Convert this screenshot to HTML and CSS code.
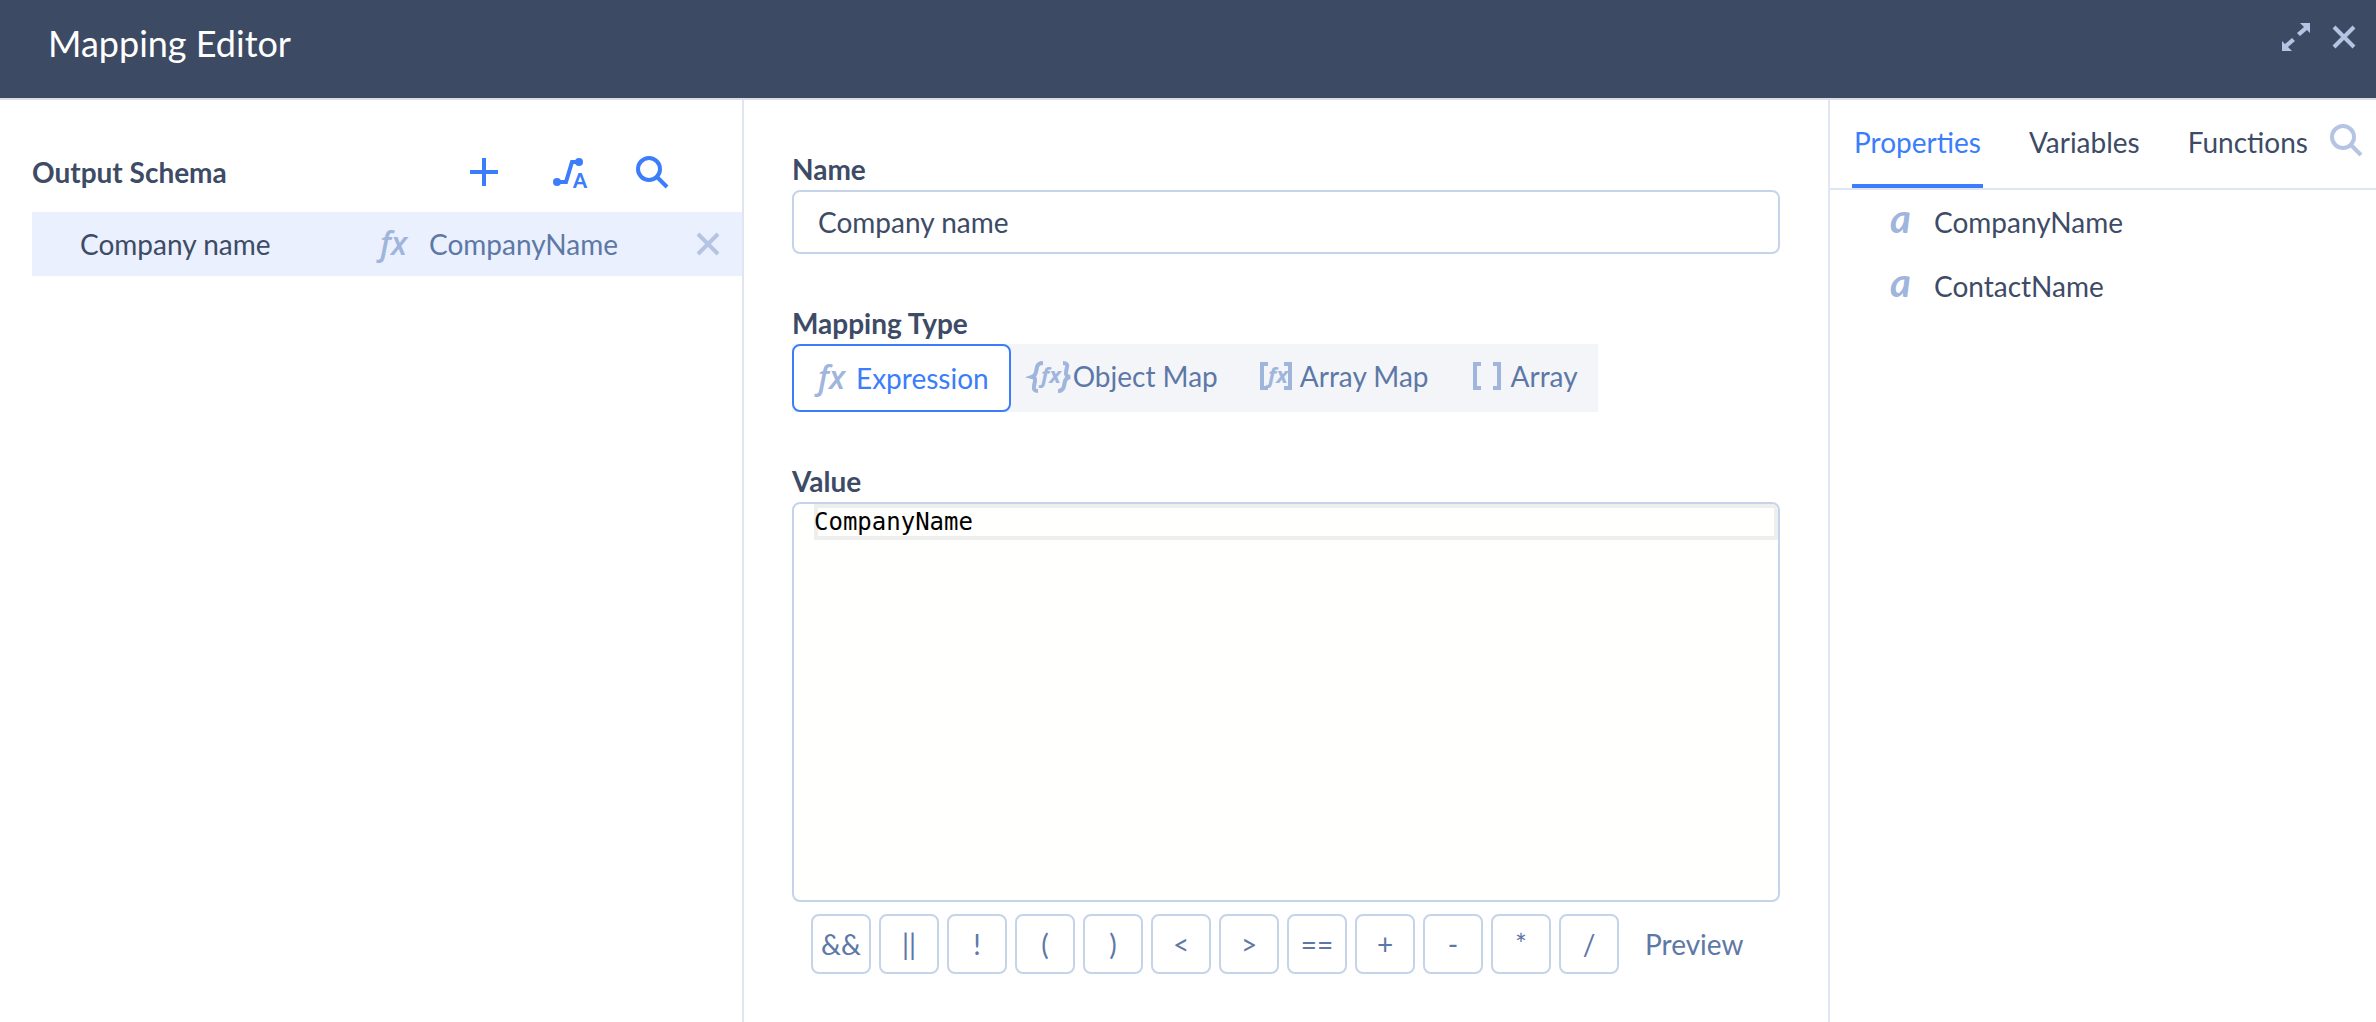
FILE: index.html
```html
<!DOCTYPE html>
<html lang="en">
<head>
<meta charset="utf-8">
<title>Mapping Editor</title>
<link rel="stylesheet" href="styles.css">
</head>
<body>
<header class="topbar">
  <h1 class="title">Mapping Editor</h1>
  <div class="window-actions">
    <button class="icon-button" type="button" aria-label="Expand">
      <svg width="28" height="28" viewBox="0 0 28 28" fill="currentColor"><path d="M18 0h10v10l-3-3-7 6-3-3 7-6-4-4zM10 28H0V18l3 3 7-6 3 3-7 6 4 4z"/></svg>
    </button>
    <button class="icon-button" type="button" aria-label="Close">
      <svg width="24" height="24" viewBox="0 0 24 24" fill="none" stroke="currentColor" stroke-width="4"><path d="M2 2l20 20M22 2L2 22"/></svg>
    </button>
  </div>
</header>

<main class="workspace">
  <section class="schema">
    <div class="schema-head">
      <h2 class="schema-title">Output Schema</h2>
      <div class="schema-tools">
        <button class="icon-button" type="button" aria-label="Add">
          <svg width="36" height="36" viewBox="0 0 36 36" fill="none" stroke="currentColor" stroke-width="4"><path d="M18 4v28M4 18h28"/></svg>
        </button>
        <button class="icon-button" type="button" aria-label="Auto map">
          <svg width="40" height="36" viewBox="0 0 40 36"><path d="M9 28h9l6-20h7" fill="none" stroke="currentColor" stroke-width="4"/><circle cx="9" cy="28" r="4" fill="currentColor"/><circle cx="31" cy="8" r="4" fill="currentColor"/><text class="badge-letter" x="32" y="34" text-anchor="middle">A</text></svg>
        </button>
        <button class="icon-button" type="button" aria-label="Search schema">
          <svg width="36" height="36" viewBox="0 0 36 36" fill="none" stroke="currentColor" stroke-width="4"><circle cx="15" cy="15" r="11"/><path d="M23 23l10 10"/></svg>
        </button>
      </div>
    </div>
    <div class="schema-row">
      <span class="schema-field">Company name</span>
      <span class="schema-value"><span class="fx">fx</span>CompanyName</span>
      <button class="icon-button remove" type="button" aria-label="Remove">
        <svg width="24" height="24" viewBox="0 0 24 24" fill="none" stroke="currentColor" stroke-width="4"><path d="M2 2l20 20M22 2L2 22"/></svg>
      </button>
    </div>
  </section>

  <form class="editor">
    <div class="field">
      <label class="label" for="name">Name</label>
      <input class="text-input" id="name" type="text" value="Company name">
    </div>
    <fieldset class="field group">
      <legend class="label">Mapping Type</legend>
      <div class="segments">
        <label class="segment expression"><input type="radio" name="type" checked><span class="fx">fx</span>Expression</label>
        <label class="segment object"><input type="radio" name="type">
          <svg class="glyph" width="44" height="36" viewBox="0 0 44 36" fill="none" stroke="currentColor" stroke-width="4"><path d="M14 5q-5 0-6 4l-1 5q-1 4-4 5 4 1 3 4l-1 5q-1 5 4 5M34 5q5 0 4 4l-1 5q-1 4 4 5-4 1-5 4l-1 5q-1 5-6 5"/><text class="fx-small" x="12" y="25">fx</text></svg>Object Map</label>
        <label class="segment array-map"><input type="radio" name="type">
          <svg class="glyph" width="32" height="36" viewBox="0 0 32 36" fill="none" stroke="currentColor" stroke-width="4"><path d="M8 6H2v24h6M24 6h6v24h-6"/><text class="fx-small" x="8" y="25">fx</text></svg>Array Map</label>
        <label class="segment array"><input type="radio" name="type">
          <svg class="glyph" width="30" height="36" viewBox="0 0 30 36" fill="none" stroke="currentColor" stroke-width="4"><path d="M8 6H2v24h6M20 6h6v24h-6"/></svg>Array</label>
      </div>
    </fieldset>
    <div class="field">
      <label class="label" for="value">Value</label>
      <div class="code">
        <textarea class="code-input" id="value" rows="1" spellcheck="false">CompanyName</textarea>
      </div>
    </div>
    <div class="operators">
      <button class="op" type="button">&amp;&amp;</button>
      <button class="op" type="button">||</button>
      <button class="op" type="button">!</button>
      <button class="op" type="button">(</button>
      <button class="op" type="button">)</button>
      <button class="op" type="button">&lt;</button>
      <button class="op" type="button">&gt;</button>
      <button class="op" type="button">==</button>
      <button class="op" type="button">+</button>
      <button class="op" type="button">-</button>
      <button class="op" type="button">*</button>
      <button class="op" type="button">/</button>
      <button class="preview" type="button">Preview</button>
    </div>
  </form>

  <aside class="library">
    <div class="tabs">
      <div class="tab-list" role="tablist">
        <button class="tab active" type="button" role="tab" aria-selected="true">Properties</button>
        <button class="tab" type="button" role="tab" aria-selected="false">Variables</button>
        <button class="tab" type="button" role="tab" aria-selected="false">Functions</button>
      </div>
      <button class="icon-button find" type="button" aria-label="Search">
        <svg width="36" height="36" viewBox="0 0 36 36" fill="none" stroke="currentColor" stroke-width="4"><circle cx="15" cy="15" r="11"/><path d="M23 23l10 10"/></svg>
      </button>
    </div>
    <ul class="properties">
      <li class="property"><span class="type-mark">a</span>CompanyName</li>
      <li class="property"><span class="type-mark">a</span>ContactName</li>
    </ul>
  </aside>
</main>
</body>
</html>
```
FILE: styles.css
```css
* {
  box-sizing: border-box;
}

body {
  margin: 0;
  min-height: 100vh;
  display: flex;
  flex-direction: column;
  font: 28px/36px Lato, sans-serif;
  color: #3d4b66;
  background: #fff;
}

button,
input,
textarea {
  font: inherit;
  color: inherit;
  margin: 0;
}

button {
  padding: 0;
  border: 0;
  background: none;
}

svg {
  display: block;
  overflow: visible;
}

.icon-button {
  display: flex;
}

.topbar {
  display: flex;
  justify-content: space-between;
  align-items: flex-start;
  height: 100px;
  padding: 23px 20px 0 48px;
  background: #3d4a63;
  border-bottom: 2px solid #dcdde4;
}

.title {
  margin: 0;
  font-size: 36px;
  line-height: 40px;
  font-weight: 400;
  color: #fff;
}

.window-actions {
  display: flex;
  align-items: center;
  gap: 22px;
  color: #b4c4e2;
}

.workspace {
  flex: 1;
  display: grid;
  grid-template-columns: 744px minmax(0, 1fr) 548px;
}

.schema {
  padding: 52px 0 0 32px;
  border-right: 2px solid #dfe5f1;
}

.schema-head {
  display: flex;
  justify-content: space-between;
  align-items: center;
  height: 40px;
  margin-bottom: 20px;
  padding-right: 72px;
}

.schema-title {
  margin: 0;
  font-size: 28px;
  line-height: 36px;
}

.schema-tools {
  display: flex;
  gap: 46px;
  color: #3b7dfb;
}

.badge-letter {
  font: 900 20px Lato, sans-serif;
  fill: currentColor;
}

.schema-row {
  display: flex;
  align-items: center;
  height: 64px;
  padding: 0 22px 0 48px;
  background: #eaf0fd;
}

.schema-field {
  width: 300px;
}

.schema-value {
  display: flex;
  align-items: baseline;
  flex: 1;
  color: #5d78a6;
}

.fx {
  font: italic 600 32px/32px "Open Sans", sans-serif;
  width: 49px;
  color: #9fb5dc;
}

.remove {
  color: #b4c4e2;
}

.editor {
  padding: 50px 48px 48px;
}

.field {
  display: flex;
  flex-direction: column;
  gap: 2px;
  margin-bottom: 50px;
}

.group {
  display: block;
  min-width: 0;
  margin: 0 0 50px;
  padding: 0;
  border: 0;
}

.label {
  display: block;
  padding: 0;
  font-weight: 700;
  line-height: 38px;
}

.group .label {
  margin-bottom: 2px;
}

.text-input {
  height: 64px;
  padding: 0 24px;
  border: 2px solid #c6d4ea;
  border-radius: 8px;
  background: #fff;
}

.segments {
  display: inline-flex;
  vertical-align: top;
  height: 68px;
  background: #f3f5f9;
}

.segment {
  display: flex;
  align-items: baseline;
  gap: 8px;
  padding: 0 20px 4px;
  line-height: 64px;
  color: #5d78a6;
}

.segment input {
  position: absolute;
  opacity: 0;
}

.segment:has(:checked) {
  color: #3b7dfb;
  background: #fff;
  border: 2px solid #3b7dfb;
  border-radius: 8px;
}

.segment.expression {
  gap: 4px;
  padding: 0 20px 0 24px;
}

.expression .fx {
  width: 34px;
}

.segment.object {
  gap: 0;
  padding-left: 18px;
}

.segment.array-map {
  padding-left: 22px;
}

.segment.array {
  padding-left: 24px;
}

.glyph {
  align-self: center;
  color: #9fb5dc;
}

.fx-small {
  font: italic 700 22px "Open Sans", sans-serif;
  fill: currentColor;
  stroke: none;
}

.code {
  height: 400px;
  padding-left: 20px;
  border: 2px solid #c6d4ea;
  border-radius: 8px;
  background: #fffffd;
  overflow: hidden;
}

.code-input {
  display: block;
  width: 100%;
  height: 36px;
  padding: 4px 0;
  border: 0;
  box-shadow: inset 0 0 0 4px #eee;
  background: none;
  resize: none;
  overflow: hidden;
  font: 24px/28px "DejaVu Sans Mono", monospace;
  color: #000;
}

.editor .field:has(.code) {
  margin-bottom: 12px;
}

.operators {
  display: flex;
  align-items: center;
  gap: 8px;
  padding-left: 19px;
  color: #5d78a6;
}

.op {
  width: 60px;
  height: 60px;
  border: 2px solid #c6d4ea;
  border-radius: 8px;
}

.preview {
  margin-left: 18px;
}

.library {
  border-left: 2px solid #dfe5f1;
}

.tabs {
  display: flex;
  justify-content: space-between;
  align-items: flex-start;
  height: 90px;
  padding: 0 12px 0 22px;
  border-bottom: 2px solid #dfe5f1;
}

.tab-list {
  display: flex;
  gap: 44px;
  height: 88px;
}

.tab {
  padding: 0 2px;
  border-bottom: 4px solid transparent;
}

.active {
  color: #3b7dfb;
  border-color: #3b7dfb;
}

.find {
  margin-top: 22px;
  color: #b4c4e2;
}

.properties {
  margin: 0;
  padding: 0 0 0 60px;
  list-style: none;
}

.property {
  display: flex;
  align-items: baseline;
  height: 64px;
  line-height: 64px;
}

.type-mark {
  width: 44px;
  font: italic 700 40px/40px Lato, sans-serif;
  color: #9fb5dc;
}
```
